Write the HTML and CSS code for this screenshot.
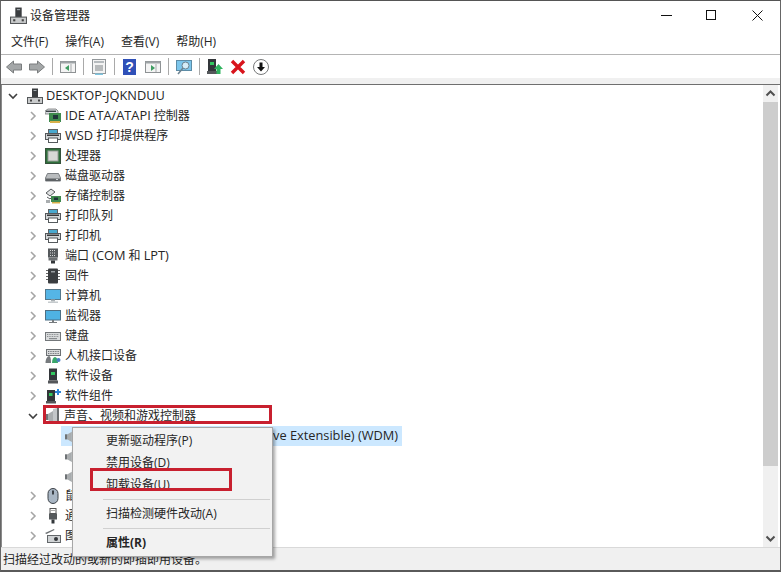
FILE: index.html
```html
<!DOCTYPE html>
<html lang="zh-CN">
<head>
<meta charset="utf-8">
<title>设备管理器</title>
<link rel="stylesheet" href="styles.css">
</head>
<body>
<svg class="defs" width="0" height="0" aria-hidden="true">
  <defs>
    <symbol id="i-chev-r" viewBox="0 0 10 12"><path d="M3 2l4 4-4 4" fill="none" stroke="#a6a6a6" stroke-width="1.6"/></symbol>
    <symbol id="i-chev-d" viewBox="0 0 12 10"><path d="M2 3l4 4 4-4" fill="none" stroke="#404040" stroke-width="1.6"/></symbol>
    <symbol id="i-pc" viewBox="0 0 16 16"><rect x="5" y="0.5" width="6" height="9" fill="#3a3d40"/><rect x="6.5" y="2" width="3" height="1" fill="#a8b0b4"/><rect x="0.5" y="9.5" width="15" height="6" fill="#c9cbcc" stroke="#55585a"/><rect x="3" y="11.5" width="2" height="2" fill="#444"/><rect x="11" y="11.5" width="2" height="2" fill="#444"/></symbol>
    <symbol id="i-ide" viewBox="0 0 16 16"><path d="M0 3l3-2h8l2 2v3H0z" fill="#d5dadd" stroke="#666" stroke-width=".7"/><rect x="1" y="2.6" width="10" height="1.4" fill="#3d4347"/><rect x="4" y="5" width="12" height="9" fill="#3f8a4e"/><rect x="8" y="7" width="5" height="4" fill="#20343a"/><rect x="5" y="13" width="10" height="2" fill="#d8b04a"/></symbol>
    <symbol id="i-printer" viewBox="0 0 16 16"><rect x="3.5" y="1.5" width="9" height="4" fill="#49a9cf" stroke="#5f6366"/><rect x="0.5" y="5.5" width="15" height="6" fill="#d3d6d8" stroke="#55595c"/><rect x="2" y="6.5" width="12" height="1.5" fill="#33373a"/><rect x="3.5" y="10" width="9" height="4.5" fill="#fff" stroke="#555a5d"/></symbol>
    <symbol id="i-cpu" viewBox="0 0 16 16"><rect x="0.5" y="0.5" width="15" height="15" fill="#2f6f3c" stroke="#34513a"/><rect x="3" y="3" width="10" height="10" fill="#d7d9d6" stroke="#9aa09a"/></symbol>
    <symbol id="i-disk" viewBox="0 0 16 16"><path d="M2.5 5.5h11l2 4.5v3H.5v-3z" fill="#b9bcbe" stroke="#7b7f82"/><rect x="1" y="10.5" width="14" height="2.5" fill="#5e6265"/><rect x="11" y="11" width="2" height="1" fill="#cfd3d4"/></symbol>
    <symbol id="i-storage" viewBox="0 0 16 16"><path d="M1 5l5-4 4 3-5 4z" fill="#e1e3e4" stroke="#55595c"/><path d="M2 9l3 2 2-2" fill="none" stroke="#55595c"/><rect x="6" y="8" width="10" height="6" fill="#3f8a4e"/><rect x="9" y="9.5" width="4" height="2.5" fill="#20343a"/><rect x="7" y="14" width="8" height="1.5" fill="#d8b04a"/><rect x="1" y="12" width="4" height="3" fill="#a9adaf"/></symbol>
    <symbol id="i-port" viewBox="0 0 16 16"><rect x="3" y="0.5" width="10" height="9" fill="#55595c"/><path d="M5 2.5h6M5 5h6M5 7.5h6" stroke="#d5d7d8" stroke-dasharray="1 1"/><rect x="3.5" y="9.5" width="9" height="3" fill="#6c7073"/><rect x="6" y="12.5" width="4" height="3" fill="#33373a"/></symbol>
    <symbol id="i-fw" viewBox="0 0 16 16"><rect x="3" y="0.5" width="10" height="15" rx="1" fill="#3a3d40"/><path d="M1 2.5h2M1 5.5h2M1 8.5h2M1 11.5h2M13 2.5h2M13 5.5h2M13 8.5h2M13 11.5h2" stroke="#666"/><rect x="6" y="3" width="4" height="1.5" fill="#9a9fa2"/></symbol>
    <symbol id="i-pc2" viewBox="0 0 16 16"><rect x="0.5" y="1.5" width="15" height="10" fill="#55b5e6" stroke="#54788c"/><rect x="6" y="11.5" width="4" height="2" fill="#a9b0b4"/><rect x="3" y="13.5" width="10" height="1.5" fill="#c6cbce"/></symbol>
    <symbol id="i-monitor" viewBox="0 0 16 16"><rect x="0.5" y="2.5" width="15" height="9.5" fill="#4fb2e3" stroke="#4d6f84"/><rect x="7" y="12" width="2" height="2" fill="#767b7e"/><rect x="4" y="14" width="8" height="1" fill="#767b7e"/></symbol>
    <symbol id="i-kbd" viewBox="0 0 16 16"><rect x="0.5" y="4.5" width="15" height="8" fill="#d9dbdc" stroke="#73777a"/><path d="M2 6.5h12M2 8.5h12" stroke="#888c8f" stroke-dasharray="1 .7"/><rect x="4" y="10" width="8" height="1.2" fill="#888c8f"/></symbol>
    <symbol id="i-hid" viewBox="0 0 16 16"><rect x="1.5" y="1.5" width="14" height="6" fill="#d9dbdc" stroke="#6c7073"/><path d="M3 3.5h11M3 5.5h11" stroke="#70747a" stroke-dasharray="1 .7"/><path d="M0.5 15c0-4 2-7 3.5-7s2 3 2 7z" fill="#777b7e"/><path d="M7 15c0-4 1.5-6 3-6s3 2 3 6z" fill="#3aa76b"/><circle cx="13.5" cy="12" r="2" fill="#4a7ec2"/></symbol>
    <symbol id="i-soft" viewBox="0 0 16 16"><rect x="4" y="0.5" width="8" height="12" fill="#33363a"/><rect x="6" y="4" width="4" height="3" fill="#32c75f"/><rect x="3" y="12.5" width="10" height="3" fill="#54575a"/></symbol>
    <symbol id="i-comp" viewBox="0 0 16 16"><rect x="2" y="2" width="8" height="11" fill="#33363a"/><rect x="4" y="5" width="3.5" height="3" fill="#32c75f"/><rect x="1" y="13" width="10" height="2.5" fill="#54575a"/><path d="M10 3h2V1h2v2h2v2h-2v2h-2V5h-2z" fill="#2f86d6"/></symbol>
    <symbol id="i-spk" viewBox="0 0 14 16"><path d="M0 6h3v6H0z" fill="#6f7376"/><path d="M3 6l5-3v12l-5-3z" fill="#a9adaf"/><path d="M8 1l4-1v16l-4-1z" fill="#c3c7c9"/><rect x="12" y="0" width="2" height="16" fill="#6a6e70"/></symbol>
    <symbol id="i-mouse" viewBox="0 0 16 16"><rect x="3" y="0.5" width="10" height="15" rx="5" fill="#a9b6c4" stroke="#3b4046"/><rect x="7" y="2.5" width="2" height="4" fill="#3b4046"/></symbol>
    <symbol id="i-usb" viewBox="0 0 16 16"><rect x="5" y="0.5" width="6" height="5" fill="#fff" stroke="#555"/><rect x="6.5" y="2" width="1" height="1" fill="#555"/><rect x="8.5" y="2" width="1" height="1" fill="#555"/><rect x="4" y="5.5" width="8" height="6" fill="#55595c"/><rect x="6.5" y="11.5" width="3" height="4" fill="#33373a"/></symbol>
    <symbol id="i-cam" viewBox="0 0 16 16"><path d="M0 5l9-4 .5 1-8 4z" fill="#6c7073"/><rect x="2.5" y="7.5" width="13" height="7" fill="#d0d3d5" stroke="#63676a"/><circle cx="11" cy="11" r="2" fill="#33373a"/></symbol>
  </defs>
</svg>

<div class="window">
  <header class="titlebar">
    <svg class="title-icon"><use href="#i-pc"/></svg>
    <span class="title-text">设备管理器</span>
    <div class="caption">
      <span class="cap-btn"><svg width="11" height="11" viewBox="0 0 11 11"><path d="M0 5.5h11" stroke="#111"/></svg></span>
      <span class="cap-btn"><svg width="11" height="11" viewBox="0 0 11 11"><rect x=".5" y=".5" width="9" height="9" fill="none" stroke="#111"/></svg></span>
      <span class="cap-btn"><svg width="11" height="11" viewBox="0 0 11 11"><path d="M.5 .5l10 10M10.5 .5l-10 10" stroke="#111"/></svg></span>
    </div>
  </header>

  <nav class="menubar">
    <span>文件(F)</span><span>操作(A)</span><span>查看(V)</span><span>帮助(H)</span>
  </nav>

  <div class="toolbar">
    <svg class="tool" viewBox="0 0 16 16"><path d="M.5 8l7-6v3h8v6h-8v3z" fill="#a4a7a8" stroke="#7a7d7e"/></svg>
    <svg class="tool" viewBox="0 0 16 16"><path d="M15.5 8l-7-6v3h-8v6h8v3z" fill="#a4a7a8" stroke="#7a7d7e"/></svg>
    <i class="sep"></i>
    <svg class="tool" viewBox="0 0 16 16"><rect x=".5" y="2.5" width="15" height="11" fill="#f4f4f4" stroke="#8e9294"/><rect x=".5" y="2.5" width="15" height="2" fill="#9ea3a6"/><path d="M9 6v6L5 9z" fill="#3f9d62"/><path d="M11 5v8" stroke="#a5a9ab"/></svg>
    <i class="sep"></i>
    <svg class="tool" viewBox="0 0 16 16"><rect x="1.5" y=".5" width="13" height="14" fill="#f3f3f3" stroke="#92979a"/><rect x="3" y="2" width="10" height="2" fill="#b6bbbe"/><path d="M4 7h8M4 9h8M4 11h8" stroke="#7d8285"/><rect x="4" y="14.5" width="8" height="1.5" fill="#7fc5e0"/></svg>
    <i class="sep"></i>
    <svg class="tool" viewBox="0 0 16 16"><rect x="1" y="0" width="13" height="16" fill="#2f50b8"/><text x="7.5" y="13" class="q">?</text></svg>
    <svg class="tool" viewBox="0 0 16 16"><rect x=".5" y="2.5" width="15" height="11" fill="#f4f4f4" stroke="#8e9294"/><rect x=".5" y="2.5" width="15" height="2" fill="#9ea3a6"/><path d="M6 6v6l4-3z" fill="#3f9d62"/><path d="M11 5v8" stroke="#a5a9ab"/></svg>
    <i class="sep"></i>
    <svg class="tool" viewBox="0 0 16 16"><rect x=".5" y="1.5" width="15" height="10" fill="#7cc6ec" stroke="#5d8ca6"/><circle cx="9.5" cy="6.5" r="3.5" fill="#d6edf8" stroke="#6b8290"/><path d="M7 9L2 15" stroke="#6b8290" stroke-width="1.5"/></svg>
    <i class="sep"></i>
    <svg class="tool" viewBox="0 0 16 16"><rect x="1" y="0" width="8" height="12" fill="#33363a"/><rect x="3" y="3" width="4" height="3" fill="#32c75f"/><rect x="0" y="12" width="10" height="3" fill="#54575a"/><path d="M11.5 5l4.5 5h-2.500v5h-4v-5H7z" fill="#2fb35e"/></svg>
    <svg class="tool" viewBox="0 0 16 16"><path d="M2 2l12 12M14 2L2 14" stroke="#d8141c" stroke-width="3.4"/></svg>
    <svg class="tool" viewBox="0 0 16 16"><circle cx="8" cy="8" r="7.5" fill="#fff" stroke="#77797a"/><path d="M6.5 3.5h3V8H12l-4 4.500L4 8h2.500z" fill="#111"/></svg>
  </div>

  <div class="band"></div>

  <main class="content">
    <section class="tree">
      <div class="row root"><svg class="chev-d"><use href="#i-chev-d"/></svg><svg class="icon"><use href="#i-pc"/></svg><span><span class="lat">DESKTOP-JQKNDUU</span></span></div>
      <div class="row"><svg class="chev"><use href="#i-chev-r"/></svg><svg class="icon"><use href="#i-ide"/></svg><span><span class="lat">IDE ATA/ATAPI</span> 控制器</span></div>
      <div class="row"><svg class="chev"><use href="#i-chev-r"/></svg><svg class="icon"><use href="#i-printer"/></svg><span><span class="lat">WSD</span> 打印提供程序</span></div>
      <div class="row"><svg class="chev"><use href="#i-chev-r"/></svg><svg class="icon"><use href="#i-cpu"/></svg><span>处理器</span></div>
      <div class="row"><svg class="chev"><use href="#i-chev-r"/></svg><svg class="icon"><use href="#i-disk"/></svg><span>磁盘驱动器</span></div>
      <div class="row"><svg class="chev"><use href="#i-chev-r"/></svg><svg class="icon"><use href="#i-storage"/></svg><span>存储控制器</span></div>
      <div class="row"><svg class="chev"><use href="#i-chev-r"/></svg><svg class="icon"><use href="#i-printer"/></svg><span>打印队列</span></div>
      <div class="row"><svg class="chev"><use href="#i-chev-r"/></svg><svg class="icon"><use href="#i-printer"/></svg><span>打印机</span></div>
      <div class="row"><svg class="chev"><use href="#i-chev-r"/></svg><svg class="icon"><use href="#i-port"/></svg><span>端口 <span class="lat">(COM</span> 和 <span class="lat">LPT)</span></span></div>
      <div class="row"><svg class="chev"><use href="#i-chev-r"/></svg><svg class="icon"><use href="#i-fw"/></svg><span>固件</span></div>
      <div class="row"><svg class="chev"><use href="#i-chev-r"/></svg><svg class="icon"><use href="#i-pc2"/></svg><span>计算机</span></div>
      <div class="row"><svg class="chev"><use href="#i-chev-r"/></svg><svg class="icon"><use href="#i-monitor"/></svg><span>监视器</span></div>
      <div class="row"><svg class="chev"><use href="#i-chev-r"/></svg><svg class="icon"><use href="#i-kbd"/></svg><span>键盘</span></div>
      <div class="row"><svg class="chev"><use href="#i-chev-r"/></svg><svg class="icon"><use href="#i-hid"/></svg><span>人机接口设备</span></div>
      <div class="row"><svg class="chev"><use href="#i-chev-r"/></svg><svg class="icon"><use href="#i-soft"/></svg><span>软件设备</span></div>
      <div class="row"><svg class="chev"><use href="#i-chev-r"/></svg><svg class="icon"><use href="#i-comp"/></svg><span>软件组件</span></div>
      <div class="row"><svg class="chev-d"><use href="#i-chev-d"/></svg><svg class="icon"><use href="#i-spk"/></svg><span>声音、视频和游戏控制器</span></div>
      <div class="row child"><span class="sel"><svg class="icon-s"><use href="#i-spk"/></svg><span><span class="lat">Realtek Virtual Audio Driver (Wave Extensible) (WDM)</span></span></span></div>
      <div class="row child"><span class="plain"><svg class="icon-s"><use href="#i-spk"/></svg></span></div>
      <div class="row child"><span class="plain"><svg class="icon-s"><use href="#i-spk"/></svg></span></div>
      <div class="row"><svg class="chev"><use href="#i-chev-r"/></svg><svg class="icon"><use href="#i-mouse"/></svg><span>鼠标和其他指针设备</span></div>
      <div class="row"><svg class="chev"><use href="#i-chev-r"/></svg><svg class="icon"><use href="#i-usb"/></svg><span>通用串行总线控制器</span></div>
      <div class="row"><svg class="chev"><use href="#i-chev-r"/></svg><svg class="icon"><use href="#i-cam"/></svg><span>图像设备</span></div>
    </section>
    <aside class="scrollbar">
      <svg class="arrow" viewBox="0 0 15 17"><path d="M3.5 10.5l4-4 4 4" fill="none" stroke="#505050" stroke-width="2"/></svg>
      <div class="thumb"></div>
      <div class="track"></div>
      <svg class="arrow" viewBox="0 0 15 17"><path d="M3.5 6.5l4 4 4-4" fill="none" stroke="#505050" stroke-width="2"/></svg>
    </aside>
  </main>

  <footer class="statusbar">扫描经过改动的或新的即插即用设备。</footer>

  <ul class="ctx">
    <li>更新驱动程序(P)</li>
    <li>禁用设备(D)</li>
    <li>卸载设备(U)</li>
    <li class="div"></li>
    <li>扫描检测硬件改动(A)</li>
    <li class="div"></li>
    <li class="bold">属性(R)</li>
  </ul>
  <div class="mark mark-a"></div>
  <div class="mark mark-b"></div>
</div>
</body>
</html>
```

FILE: styles.css
```css
* { box-sizing: border-box; }
html, body { margin: 0; padding: 0; }
body {
  width: 781px;
  height: 572px;
  overflow: hidden;
  font: 12px/20px "Open Sans", "Noto Sans CJK SC", sans-serif;
  color: #262626;
  background: #fff;
}
.defs { position: absolute; }
.lat { font-size: 12.8px; line-height: 1; }

.window {
  position: relative;
  width: 781px;
  height: 572px;
  display: flex;
  flex-direction: column;
  background: #fff;
  border-top: 1px solid #555;
  border-left: 1px solid #666;
  border-right: 1px solid #666;
  border-bottom: 2px solid #5a5a5a;
}

.titlebar {
  height: 29px;
  flex: none;
  display: flex;
  align-items: center;
  padding-left: 9px;
}
.title-icon { width: 17px; height: 17px; margin-right: 3px; }
.title-text { font-size: 12px; }
.caption { margin-left: auto; display: flex; }
.cap-btn {
  width: 45.5px;
  height: 29px;
  display: flex;
  align-items: center;
  justify-content: center;
}

.menubar {
  height: 25px;
  flex: none;
  display: flex;
  align-items: center;
  gap: 17px;
  padding-left: 10px;
  border-bottom: 1px solid #b4b4b4;
}

.toolbar {
  height: 23px;
  flex: none;
  display: flex;
  align-items: center;
  gap: 7px;
  padding-left: 5px;
}
.tool { width: 16px; height: 16px; flex: none; }
.sep { width: 1px; height: 17px; background: #a9a9a9; flex: none; }
.q { font: bold 14px "Liberation Sans", sans-serif; fill: #fff; text-anchor: middle; }

.band {
  height: 7px;
  flex: none;
  background: #f0f0f0;
  border-bottom: 1px solid #6f6f6f;
}

.content {
  flex: 1;
  min-height: 0;
  display: flex;
  padding: 0 2px 0 1px;
  border-left: 1px solid #8a8a8a;
}
.tree { flex: 1; min-width: 0; overflow: hidden; padding-top: 1px; }
.row {
  height: 20px;
  display: flex;
  align-items: center;
  padding-left: 25px;
  white-space: nowrap;
}
.row.root { padding-left: 4px; }
.chev { width: 10px; height: 12px; margin-right: 7px; flex: none; }
.chev-d { width: 12px; height: 10px; margin-right: 5px; flex: none; margin-left: -1px; }
.root .chev-d { margin-left: 0; margin-right: 8px; }
.icon { width: 16px; height: 16px; margin-right: 4px; flex: none; }
.root .icon { margin-right: 3px; }
.child { padding-left: 58px; }
.sel, .plain { display: flex; align-items: center; height: 20px; padding-left: 4px; }
.sel { background: #cce8ff; padding-right: 4px; }
.icon-s { width: 12px; height: 16px; margin-right: 6px; flex: none; }

.scrollbar {
  width: 15px;
  flex: none;
  display: flex;
  flex-direction: column;
  background: #f0f0f0;
}
.arrow { width: 15px; height: 17px; flex: none; }
.thumb { height: 364px; background: #cdcdcd; flex: none; }
.track { flex: 1; }

.statusbar {
  height: 23px;
  flex: none;
  padding-left: 2px;
  line-height: 24px;
  background: #f0f0f0;
  border-top: 1px solid #d9d9d9;
  font-size: 12px;
}

.ctx {
  position: absolute;
  left: 71px;
  top: 426px;
  width: 201px;
  height: 130px;
  margin: 0;
  padding: 2px;
  list-style: none;
  background: #f2f2f2;
  border: 1px solid #a6a6a6;
  box-shadow: 2px 2px 3px rgba(0,0,0,.35);
}
.ctx li {
  height: 22px;
  line-height: 22px;
  padding-left: 31px;
}
.ctx li.div {
  height: 1px;
  margin: 3px 0 3px 28px;
  padding: 0;
  background: #d0d0d0;
}
.ctx li.bold { font-weight: 700; }

.mark { position: absolute; border: 3px solid #c8202f; }
.mark-a { left: 42px; top: 404px; width: 229px; height: 19px; }
.mark-b { left: 89px; top: 467px; width: 142px; height: 23px; }
```
